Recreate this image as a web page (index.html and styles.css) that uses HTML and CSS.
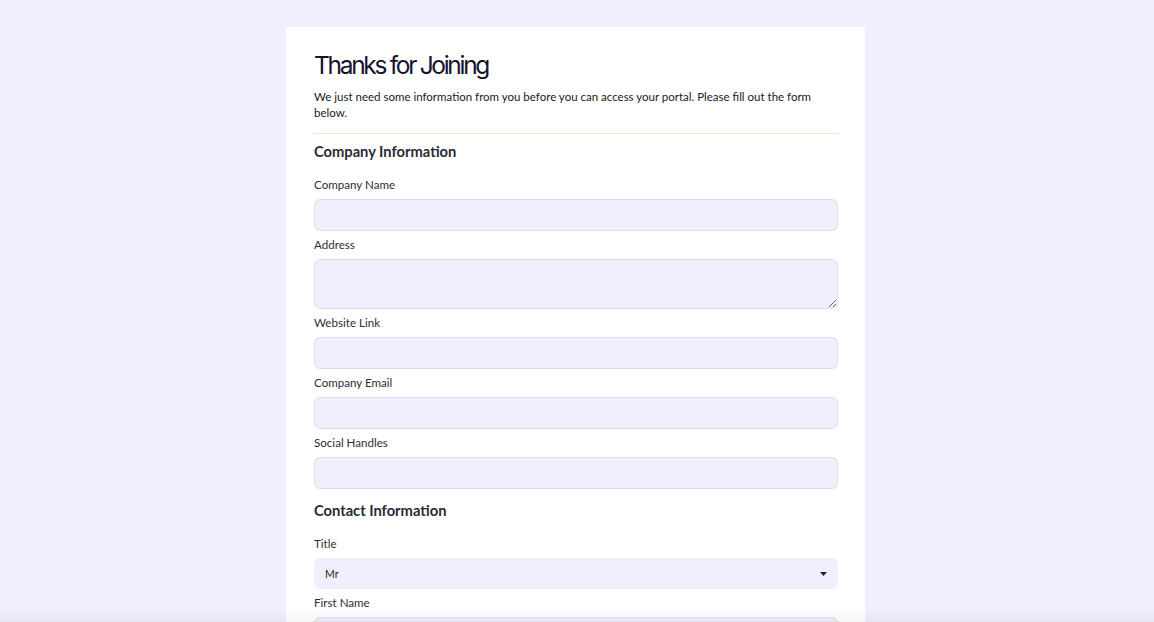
FILE: index.html
```html
<!DOCTYPE html>
<html>
<head>
    <meta charset="utf-8" />
    <title>Thanks for Joining</title>
    <link rel="stylesheet" href="styles.css">
</head>
<body>
    <div class="page">
        <form class="card">
            <h1 class="title">Thanks for Joining</h1>
            <p class="intro">We just need some information from you before you can access your portal. Please fill out the form below.</p>
            <hr class="divider" />

            <!-- 公司信息 -->
            <h2 class="section">Company Information</h2>
            <label class="label">Company Name</label>
            <input class="field" type="text" />
            <label class="label">Address</label>
            <textarea class="field area"></textarea>
            <label class="label">Website Link</label>
            <input class="field" type="text" />
            <label class="label">Company Email</label>
            <input class="field" type="text" />
            <label class="label">Social Handles</label>
            <input class="field" type="text" />

            <!-- 联系人信息 -->
            <h2 class="section contact">Contact Information</h2>
            <label class="label">Title</label>
            <div class="select">
                <span>Mr</span>
                <svg width="7" height="4" viewBox="0 0 7 4"><path d="M0 0h7L3.5 4z" fill="#222"/></svg>
            </div>
            <label class="label">First Name</label>
            <input class="field" type="text" />
            <label class="label">Last Name</label>
            <input class="field" type="text" />
        </form>
    </div>
    <div class="fade"></div>
</body>
</html>
```

FILE: styles.css
```css
/*清除边距*/
body, h1, h2, p, hr{
    margin: 0;
    padding: 0;
}
body{
    background-color: #f1effd;
    font-family: Lato, "Noto Sans", sans-serif;
    color: #1d1d2c;
    overflow: hidden;
}
.page{
    display: flex;
    justify-content: center;
    padding-top: 27px;
}
/*白色卡片*/
.card{
    width: 524px;
    background-color: #fff;
    padding: 21px 27px 40px 28px;
    display: flex;
    flex-direction: column;
    margin-left: -3px;
}
.title{
    font-family: Inter, sans-serif;
    font-size: 24.5px;
    font-weight: 400;
    letter-spacing: -2.3px;
    line-height: 34px;
    color: #14142b;
}
.intro{
    font-size: 11.5px;
    line-height: 16px;
    margin-top: 7px;
    color: #1a1a22;
}
.divider{
    border: none;
    border-top: 1px solid #e5eac4;
    margin-top: 12px;
}
.section{
    font-size: 14.7px;
    font-weight: 700;
    line-height: 20px;
    margin-top: 7px;
    margin-bottom: 10px;
    color: #2a2a33;
}
.section.contact{
    margin-top: 11px;
}
.label{
    font-size: 11.6px;
    line-height: 16px;
    margin: 6px 0;
    color: #2e2e34;
}
.field{
    height: 32px;
    box-sizing: border-box;
    border: 1px solid #dedbef;
    border-radius: 6px;
    background-color: #f1effd;
    font-family: inherit;
}
.area{
    height: 50px;
    resize: vertical;
}
/*下拉框*/
.select{
    height: 31px;
    border-radius: 6px;
    background-color: #f1effd;
    display: flex;
    align-items: center;
    justify-content: space-between;
    padding: 0 11px 0 11px;
    font-size: 10.5px;
    color: #1a1a30;
}
/*底部阴影*/
.fade{
    position: fixed;
    left: 0;
    right: 0;
    bottom: 0;
    height: 14px;
    background: linear-gradient(to bottom, rgba(0,0,0,0), rgba(0,0,0,0.04));
}
```
